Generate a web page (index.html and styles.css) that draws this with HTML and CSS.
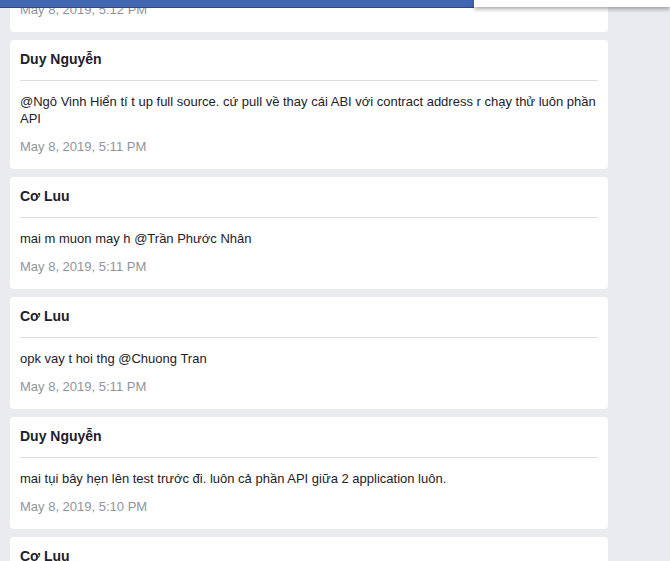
FILE: index.html
```html
<!DOCTYPE html>
<html>
<head>
<meta charset="utf-8">
<link rel="stylesheet" href="styles.css">
</head>
<body>
<div class="topbar"></div>
<div class="popup"></div>
<div class="feed">
  <div class="card">
    <div class="name">Cơ Luu</div>
    <div class="msg">ok</div>
    <div class="date">May 8, 2019, 5:12 PM</div>
  </div>
  <div class="card">
    <div class="name">Duy Nguyễn</div>
    <div class="msg">@Ngô Vinh Hiển tí t up full source. cứ pull về thay cái ABI với contract address r chạy thử luôn phần API</div>
    <div class="date">May 8, 2019, 5:11 PM</div>
  </div>
  <div class="card">
    <div class="name">Cơ Luu</div>
    <div class="msg">mai m muon may h @Trần Phước Nhân</div>
    <div class="date">May 8, 2019, 5:11 PM</div>
  </div>
  <div class="card">
    <div class="name">Cơ Luu</div>
    <div class="msg">opk vay t hoi thg @Chuong Tran</div>
    <div class="date">May 8, 2019, 5:11 PM</div>
  </div>
  <div class="card">
    <div class="name">Duy Nguyễn</div>
    <div class="msg">mai tụi bây hẹn lên test trước đi. luôn cả phần API giữa 2 application luôn.</div>
    <div class="date">May 8, 2019, 5:10 PM</div>
  </div>
  <div class="card">
    <div class="name">Cơ Luu</div>
    <div class="msg">ok</div>
    <div class="date">May 8, 2019, 5:10 PM</div>
  </div>
</div>
</body>
</html>
```
FILE: styles.css
```css
html, body {
  margin: 0;
  padding: 0;
  background: #e9ebee;
  font-family: "Liberation Sans", Arial, sans-serif;
  overflow: hidden;
  height: 561px;
}
.topbar {
  position: fixed;
  top: 0;
  left: 0;
  width: 474px;
  height: 7px;
  background: #4267b2;
  border-bottom: 1px solid #29487d;
  z-index: 10;
}
.popup {
  position: fixed;
  top: 0;
  left: 474px;
  right: 0;
  height: 7px;
  background: #fff;
  box-shadow: 0 2px 4px rgba(0, 0, 0, 0.35);
  z-index: 11;
}
.feed {
  display: flex;
  flex-direction: column;
  gap: 8px;
  width: 598px;
  padding-left: 10px;
  margin-top: -80px;
}
.card {
  background: #fff;
  border-radius: 4px;
  padding: 10px 10px 14px;
}
.name {
  font-size: 14px;
  font-weight: bold;
  line-height: 18px;
  color: #1d2129;
  padding-bottom: 12px;
  border-bottom: 1px solid #dadde1;
}
.msg {
  font-size: 13px;
  line-height: 16.5px;
  color: #1d2129;
  margin-top: 13px;
}
.date {
  font-size: 13px;
  line-height: 16px;
  color: #90949c;
  margin-top: 11.5px;
}
```
